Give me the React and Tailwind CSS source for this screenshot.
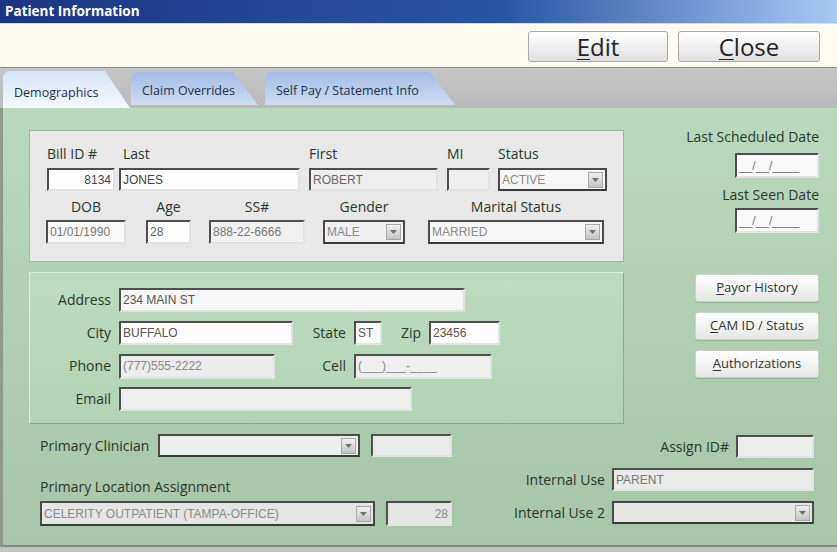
import React from "react";

const sans = "font-['Open_Sans',sans-serif]";
const mono = "font-['Liberation_Sans',sans-serif]";

function Label({ children, className = "" }) {
  return (
    <div className={`${sans} text-[14px] leading-[16px] text-[#28362b] whitespace-nowrap ${className}`}>
      {children}
    </div>
  );
}

function Input({ value = "", className = "", right = false, tone = "text-[#555]", bg = "bg-[#f7f7f7]" }) {
  return (
    <div
      className={`h-[23px] flex items-center px-[2px] border-2 border-t-[#4e4e4e] border-l-[#4e4e4e] border-r-[#e2e2e2] border-b-[#e2e2e2] ${bg} ${mono} text-[12px] ${tone} whitespace-nowrap overflow-hidden ${
        right ? "justify-end" : ""
      } ${className}`}
    >
      {value}
    </div>
  );
}

function Combo({ value = "", className = "", bg = "bg-[#f3f3f3]" }) {
  return (
    <div
      className={`h-[23px] flex items-center pl-[2px] pr-[2px] border-2 border-[#4a4a4a] border-b-[#3a3a3a] ${bg} ${mono} text-[12px] text-[#8a8a8a] whitespace-nowrap overflow-hidden ${className}`}
    >
      <span className="flex-1">{value}</span>
      <div className="w-[15px] h-[16px] border border-[#a8a8a8] bg-gradient-to-b from-[#f0f0f0] to-[#c4c4c4] flex items-center justify-center">
        <svg width="7" height="4" viewBox="0 0 7 4">
          <path d="M0 0h7L3.5 4z" fill="#707070" />
        </svg>
      </div>
    </div>
  );
}

function SideButton({ first, rest }) {
  return (
    <button className={`w-[124px] h-[28px] rounded-[3px] border border-[#c9d3c9] bg-gradient-to-b from-[#ffffff] to-[#e4e6e4] shadow-[0_1px_1px_rgba(0,0,0,0.15)] ${sans} text-[13px] text-[#333]`}>
      <span className="underline underline-offset-2">{first}</span>
      {rest}
    </button>
  );
}

function Tab({ children, active, className = "" }) {
  return (
    <div
      className={`${className} rounded-tl-[7px] [clip-path:polygon(0_0,calc(100%-25px)_0,100%_100%,0_100%)] flex items-center pl-[11px] ${sans} text-[12.5px] text-[#1f2f45] ${
        active
          ? "h-[37px] pt-[8px] bg-gradient-to-b from-[#d6e5f8] to-[#f3f8fd]"
          : "h-[33px] pt-[5px] mb-[3px] bg-gradient-to-b from-[#a4bde6] to-[#cddcf2]"
      }`}
    >
      {children}
    </div>
  );
}

export default function App() {
  return (
    <div className="w-[837px] h-[552px] overflow-hidden bg-[#c4c4c4] flex flex-col">
      {/* title bar */}
      <div className="h-[24px] shrink-0 bg-gradient-to-r from-[#1a3682] via-[#2a55a6] via-60% to-[#a8caf3] flex items-center pl-[5px] border-b border-[#c9dbf2]">
        <span className={`${sans} text-[13.5px] font-bold text-white`}>Patient Information</span>
      </div>

      {/* header with buttons */}
      <div className="h-[44px] shrink-0 bg-[#fffbf1] flex justify-end items-start pt-[7px] pr-[17px] gap-[10px] border-b border-[#8a8a8a]">
        <button className={`w-[140px] h-[31px] rounded-[3px] border border-[#a9a9a9] bg-gradient-to-b from-[#ffffff] to-[#e0e0e0] ${sans} text-[24px] leading-none text-[#222]`}>
          <span className="underline underline-offset-[3px] decoration-1">E</span>dit
        </button>
        <button className={`w-[142px] h-[31px] rounded-[3px] border border-[#a9a9a9] bg-gradient-to-b from-[#ffffff] to-[#e0e0e0] ${sans} text-[24px] leading-none text-[#222]`}>
          <span className="underline underline-offset-[3px] decoration-1">C</span>lose
        </button>
      </div>

      {/* tabs */}
      <div className="h-[40px] shrink-0 flex items-end pl-[3px] bg-gradient-to-b from-[#c6c6c6] to-[#bababa]">
        <Tab active className="w-[127px]">Demographics</Tab>
        <Tab className="w-[127px] ml-[1px]">Claim Overrides</Tab>
        <Tab className="w-[190px] ml-[7px]">Self Pay / Statement Info</Tab>
      </div>

      {/* green panel */}
      <div className="h-[439px] shrink-0 border-l-[3px] border-b-2 border-[#8c9a8d] border-b-[#7f8a80] bg-gradient-to-b from-[#b9d9bd] to-[#a6c5a9] flex flex-col">
        <div className="flex pl-[26px] pt-[22px]">
          <div className="w-[595px] flex flex-col">
            {/* box 1 */}
            <div className="h-[132px] bg-[#e7e8e7] border border-[#a4b0a5] pl-[17px] pt-[15px]">
              <div className="flex">
                <div className="flex flex-col w-[68px]">
                  <Label>Bill ID #</Label>
                  <Input className="mt-[6px]" value="8134" right bg="bg-[#fdfdfd]" tone="text-[#444]" />
                </div>
                <div className="flex flex-col w-[181px] ml-[4px]">
                  <Label className="pl-[4px]">Last</Label>
                  <Input className="mt-[6px]" value="JONES" bg="bg-[#fdfdfd]" tone="text-[#444]" />
                </div>
                <div className="flex flex-col w-[129px] ml-[9px]">
                  <Label>First</Label>
                  <Input className="mt-[6px]" value="ROBERT" bg="bg-[#efefef]" tone="text-[#666]" />
                </div>
                <div className="flex flex-col w-[43px] ml-[9px]">
                  <Label>MI</Label>
                  <Input className="mt-[6px]" bg="bg-[#efefef]" />
                </div>
                <div className="flex flex-col w-[109px] ml-[8px]">
                  <Label>Status</Label>
                  <Combo className="mt-[6px]" value="ACTIVE" bg="bg-[#f6f6f6]" />
                </div>
              </div>
              <div className="flex mt-[8px] -ml-[1px]">
                <div className="flex flex-col items-center w-[80px]">
                  <Label>DOB</Label>
                  <Input className="mt-[5px] h-[24px] w-full" value="01/01/1990" bg="bg-[#f9f9f9]" tone="text-[#777]" />
                </div>
                <div className="flex flex-col items-center w-[45px] ml-[20px]">
                  <Label>Age</Label>
                  <Input className="mt-[5px] h-[24px] w-full" value="28" bg="bg-[#fdfdfd]" tone="text-[#666]" />
                </div>
                <div className="flex flex-col items-center w-[96px] ml-[18px]">
                  <Label>SS#</Label>
                  <Input className="mt-[5px] h-[24px] w-full" value="888-22-6666" bg="bg-[#f1f1f1]" tone="text-[#777]" />
                </div>
                <div className="flex flex-col items-center w-[82px] ml-[18px]">
                  <Label>Gender</Label>
                  <Combo className="mt-[5px] h-[24px] w-full" value="MALE" bg="bg-[#f0f0f0]" />
                </div>
                <div className="flex flex-col items-center w-[176px] ml-[23px]">
                  <Label>Marital Status</Label>
                  <Combo className="mt-[5px] h-[24px] w-full" value="MARRIED" bg="bg-[#f6f6f6]" />
                </div>
              </div>
            </div>

            {/* box 2 */}
            <div className="h-[152px] mt-[10px] bg-gradient-to-b from-[#bcdcc0] to-[#b3d3b6] border border-t-[#d9eddb] border-l-[#d9eddb] border-r-[#8ea48f] border-b-[#8ea48f] pt-[15px] flex flex-col gap-[9px]">
              <div className="flex items-center h-[24px]">
                <Label className="w-[81px] text-right">Address</Label>
                <Input className="ml-[8px] w-[346px] h-[24px]" value="234 MAIN ST" bg="bg-[#f6f6f6]" />
              </div>
              <div className="flex items-center h-[24px]">
                <Label className="w-[81px] text-right">City</Label>
                <Input className="ml-[8px] w-[174px] h-[24px]" value="BUFFALO" bg="bg-[#fdfdfd]" />
                <Label className="w-[53px] text-right">State</Label>
                <Input className="ml-[8px] w-[28px] h-[24px]" value="ST" bg="bg-[#fdfdfd]" />
                <Label className="w-[39px] text-right">Zip</Label>
                <Input className="ml-[8px] w-[71px] h-[24px]" value="23456" bg="bg-[#fdfdfd]" />
              </div>
              <div className="flex items-center h-[24px]">
                <Label className="w-[81px] text-right">Phone</Label>
                <Input className="ml-[8px] w-[156px] h-[25px]" value="(777)555-2222" bg="bg-[#ececec]" tone="text-[#888]" />
                <Label className="w-[71px] text-right">Cell</Label>
                <Input className="ml-[8px] w-[138px] h-[25px]" value="(___)___-____" bg="bg-[#efefef]" tone="text-[#888]" />
              </div>
              <div className="flex items-center h-[24px]">
                <Label className="w-[81px] text-right">Email</Label>
                <Input className="ml-[8px] w-[293px] h-[24px]" bg="bg-[#eeeeee]" />
              </div>
            </div>
          </div>

          {/* right column */}
          <div className="flex-1 flex flex-col items-end pr-[18px]">
            <Label className="-mt-[1px]">Last Scheduled Date</Label>
            <Input className="mt-[8px] w-[84px] h-[25px]" value="__/__/____" bg="bg-[#f9f9f9]" tone="text-[#777]" />
            <Label className="mt-[9px]">Last Seen Date</Label>
            <Input className="mt-[5px] w-[84px] h-[25px]" value="__/__/____" bg="bg-[#f9f9f9]" tone="text-[#777]" />
            <div className="mt-[41px] flex flex-col gap-[10px]">
              <SideButton first="P" rest="ayor History" />
              <SideButton first="C" rest="AM ID / Status" />
              <SideButton first="A" rest="uthorizations" />
            </div>
          </div>
        </div>

        {/* bottom section */}
        <div className="flex justify-between pl-[37px] pr-[23px]">
          <div className="flex flex-col">
            <div className="flex items-center mt-[10px]">
              <Label className="w-[118px]">Primary Clinician</Label>
              <Combo className="w-[202px]" bg="bg-[#eceeec]" />
              <Input className="ml-[11px] w-[81px]" bg="bg-[#e9ebe9]" />
            </div>
            <Label className="mt-[22px]">Primary Location Assignment</Label>
            <div className="flex items-center mt-[6px]">
              <Combo className="w-[335px] h-[25px]" value="CELERITY OUTPATIENT (TAMPA-OFFICE)" bg="bg-[#e4e6e4]" />
              <Input className="ml-[11px] w-[66px] h-[25px]" value="28" right bg="bg-[#e4e6e4]" tone="text-[#888]" />
            </div>
          </div>
          <div className="flex flex-col items-end">
            <div className="flex items-center mt-[11px]">
              <Label>Assign ID#</Label>
              <Input className="ml-[7px] w-[78px] h-[22px]" bg="bg-[#eceeec]" />
            </div>
            <div className="flex items-center mt-[10px]">
              <Label>Internal Use</Label>
              <Input className="ml-[7px] w-[202px]" value="PARENT" bg="bg-[#e9ebe9]" tone="text-[#777]" />
            </div>
            <div className="flex items-center mt-[10px]">
              <Label>Internal Use 2</Label>
              <Combo className="ml-[7px] w-[202px]" bg="bg-[#e6e8e6]" />
            </div>
          </div>
        </div>
      </div>
    </div>
  );
}
